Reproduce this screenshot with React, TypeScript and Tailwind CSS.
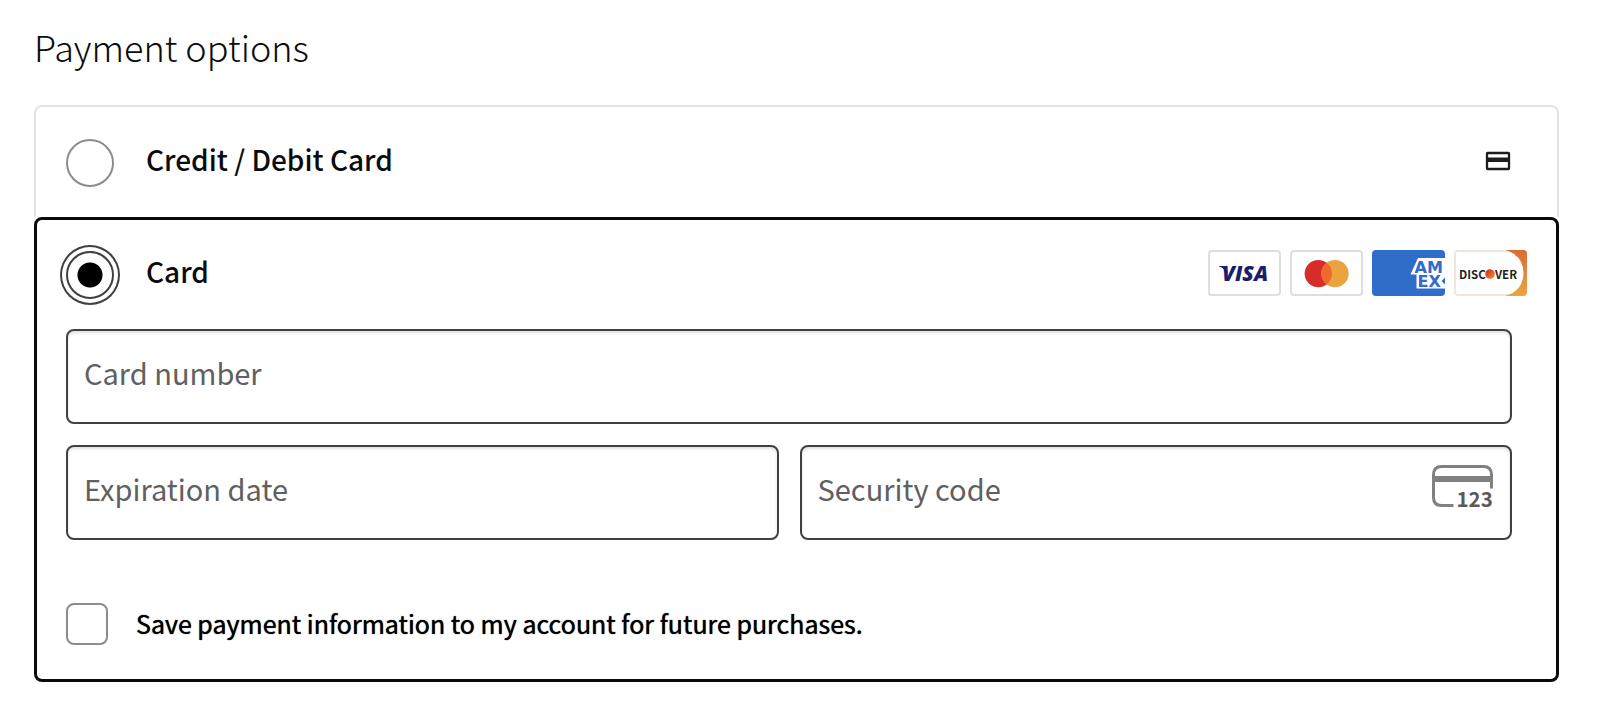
import { useState } from "react";

const field =
  "h-[95px] w-full rounded-lg border-2 border-[#404040] bg-white pl-4 pb-2.5 text-[29px] text-[#1f1f1f] shadow-[inset_0_2px_3px_rgba(0,0,0,0.12)] outline-none placeholder:text-[#606060] placeholder:opacity-100";

function Visa() {
  return (
    <svg viewBox="0 0 73 46" className="h-[46px] w-[73px]" role="img" aria-label="Visa">
      <rect x="1" y="1" width="71" height="44" rx="3" fill="#fff" stroke="#dedede" strokeWidth="2" />
      <path d="M11 16H17.5L20 23L17 22Q16 18 11 16.6Z" fill="#1b1e6e" />
      <text x="14" y="31" fontFamily="Open Sans, sans-serif" fontWeight="800" fontStyle="italic" fontSize="21" fill="#1b1e6e">
        VISA
      </text>
    </svg>
  );
}

function Mastercard() {
  return (
    <svg viewBox="0 0 73 46" className="h-[46px] w-[73px]" role="img" aria-label="Mastercard">
      <rect x="1" y="1" width="71" height="44" rx="3" fill="#fff" stroke="#dedede" strokeWidth="2" />
      <circle cx="28.3" cy="23.6" r="13.7" fill="#d82c2a" />
      <circle cx="45" cy="23.6" r="13.7" fill="#eba33f" />
      <path d="M36.65 12.75A13.7 13.7 0 0 1 36.65 34.45A13.7 13.7 0 0 1 36.65 12.75Z" fill="#ee6a2c" />
    </svg>
  );
}

function Amex() {
  return (
    <svg viewBox="0 0 73 46" className="h-[46px] w-[73px]" role="img" aria-label="American Express">
      <defs>
        <clipPath id="amex-card">
          <rect width="73" height="46" rx="4" />
        </clipPath>
      </defs>
      <g clipPath="url(#amex-card)">
        <rect width="73" height="46" fill="#2f6dca" />
        <path d="M46 8H73V38.500H44.500V24.500H38.500Z" fill="#fff" />
        <g fontFamily="DejaVu Sans, sans-serif" fontWeight="700" fontSize="16" fill="#2f6dca">
          <text x="42.500" y="22.500">AM</text>
          <text x="45.500" y="36.500">EX</text>
          <path d="M73 27.500L69.500 31L73 34.500Z" />
        </g>
      </g>
    </svg>
  );
}

function Discover() {
  return (
    <svg viewBox="0 0 73 46" className="h-[46px] w-[73px]" role="img" aria-label="Discover">
      <defs>
        <linearGradient id="discover-edge" x1="0" y1="0" x2="0" y2="1">
          <stop offset="0" stopColor="#d96c32" />
          <stop offset="1" stopColor="#eba541" />
        </linearGradient>
        <linearGradient id="discover-dot" x1="0" y1="0" x2="1" y2="1">
          <stop offset="0.2" stopColor="#dc3a25" />
          <stop offset="1" stopColor="#f2902d" />
        </linearGradient>
      </defs>
      <rect x="1" y="1" width="71" height="44" rx="3" fill="#fff" stroke="#f1e6df" strokeWidth="2" />
      <path d="M51 0H69Q73 0 73 4V42Q73 46 69 46H51Q69 41 69.500 23Q69 5 51 0Z" fill="url(#discover-edge)" />
      <g fontFamily="Noto Sans CJK SC, sans-serif" fontWeight="700" fontSize="11.500" fill="#221f20">
        <text x="5" y="28.500">DISC</text>
        <text x="41" y="28.500">VER</text>
      </g>
      <circle cx="36" cy="24" r="4.800" fill="url(#discover-dot)" />
    </svg>
  );
}

function CardIcon() {
  return (
    <svg viewBox="0 0 26 20" className="h-5 w-[26px]" aria-hidden="true">
      <rect x="2" y="2" width="22" height="16" rx="0.500" fill="none" stroke="#1d1d1d" strokeWidth="2.300" />
      <rect x="1" y="6.500" width="24" height="4.500" fill="#1d1d1d" />
    </svg>
  );
}

function SecurityCodeIcon() {
  return (
    <svg viewBox="0 0 62 44" className="h-11 w-[62px]" aria-hidden="true">
      <path d="M21.500 40.500H9.500Q1.500 40.500 1.500 32.500V9.500Q1.500 1.500 9.500 1.500H51.500Q59.500 1.500 59.500 9.500V23.500" fill="none" stroke="#808080" strokeWidth="3" />
      <rect x="1" y="11" width="59" height="6" fill="#808080" />
      <text x="24.500" y="42" fontFamily="Noto Sans CJK SC, sans-serif" fontWeight="700" fontSize="20.500" fill="#5a5a5a">
        123
      </text>
    </svg>
  );
}

export default function App() {
  const [method, setMethod] = useState("card");
  const [save, setSave] = useState(false);

  return (
    <main className="bg-white pt-[22px] pr-[51px] pb-10 pl-[34px] font-['Noto_Sans_CJK_SC','Noto_Sans',sans-serif] text-[#0b0b0b]">
      <h1 className="mb-[34px] text-[36px] leading-[49px] font-light">Payment options</h1>
      <form>
        <div className="flex h-28 items-center justify-between rounded-t-lg border-2 border-b-0 border-[#e3e3e3] pr-[46px] pb-0.5 pl-[30px]">
          <div className="flex items-center gap-8">
            <input
              id="credit"
              type="radio"
              name="method"
              checked={method === "credit"}
              onChange={() => setMethod("credit")}
              className="mt-1 size-12 appearance-none rounded-full border-2 border-[#8c8c88] bg-white checked:border-[#404040] checked:bg-[radial-gradient(circle,#000_12px,transparent_13px)]"
            />
            <label htmlFor="credit" className="pb-1 text-[28px] leading-10 font-medium">
              Credit / Debit Card
            </label>
          </div>
          <CardIcon />
        </div>

        <section className="rounded-lg border-3 border-[#0a0a0a] pr-[29px] pb-[34px] pl-[29px]">
          <div className="flex h-[109px] items-center justify-between pb-1">
            <div className="flex items-center gap-8">
              <input
                id="card"
                type="radio"
                name="method"
                checked={method === "card"}
                onChange={() => setMethod("card")}
                className="mt-1 size-12 appearance-none rounded-full border-2 border-[#8c8c88] bg-white checked:border-[#404040] checked:bg-[radial-gradient(circle,#000_12px,transparent_13px)] checked:shadow-[0_0_0_4px_#fff,0_0_0_6px_#404040]"
              />
              <label htmlFor="card" className="pb-1 text-[28px] leading-10 font-medium">
                Card
              </label>
            </div>
            <div className="flex gap-[9px]">
              <Visa />
              <Mastercard />
              <Amex />
              <Discover />
            </div>
          </div>

          <div className="mr-[15px] grid grid-cols-2 gap-[21px]">
            <input aria-label="Card number" placeholder="Card number" className={field + " col-span-2"} />
            <input aria-label="Expiration date" placeholder="Expiration date" className={field} />
            <div className="relative">
              <input aria-label="Security code" placeholder="Security code" className={field} />
              <div className="pointer-events-none absolute top-5 right-[18px]">
                <SecurityCodeIcon />
              </div>
            </div>
          </div>

          <div className="mt-[63px] flex items-center gap-7">
            <input
              id="save"
              type="checkbox"
              checked={save}
              onChange={(event) => setSave(event.target.checked)}
              className="size-[42px] appearance-none rounded-lg border-2 border-[#8c8c88] bg-white checked:bg-[#404040]"
            />
            <label htmlFor="save" className="pb-0.5 text-[25px] leading-9 text-black [text-shadow:0_0_1px_#000]">
              Save payment information to my account for future purchases.
            </label>
          </div>
        </section>
      </form>
    </main>
  );
}
